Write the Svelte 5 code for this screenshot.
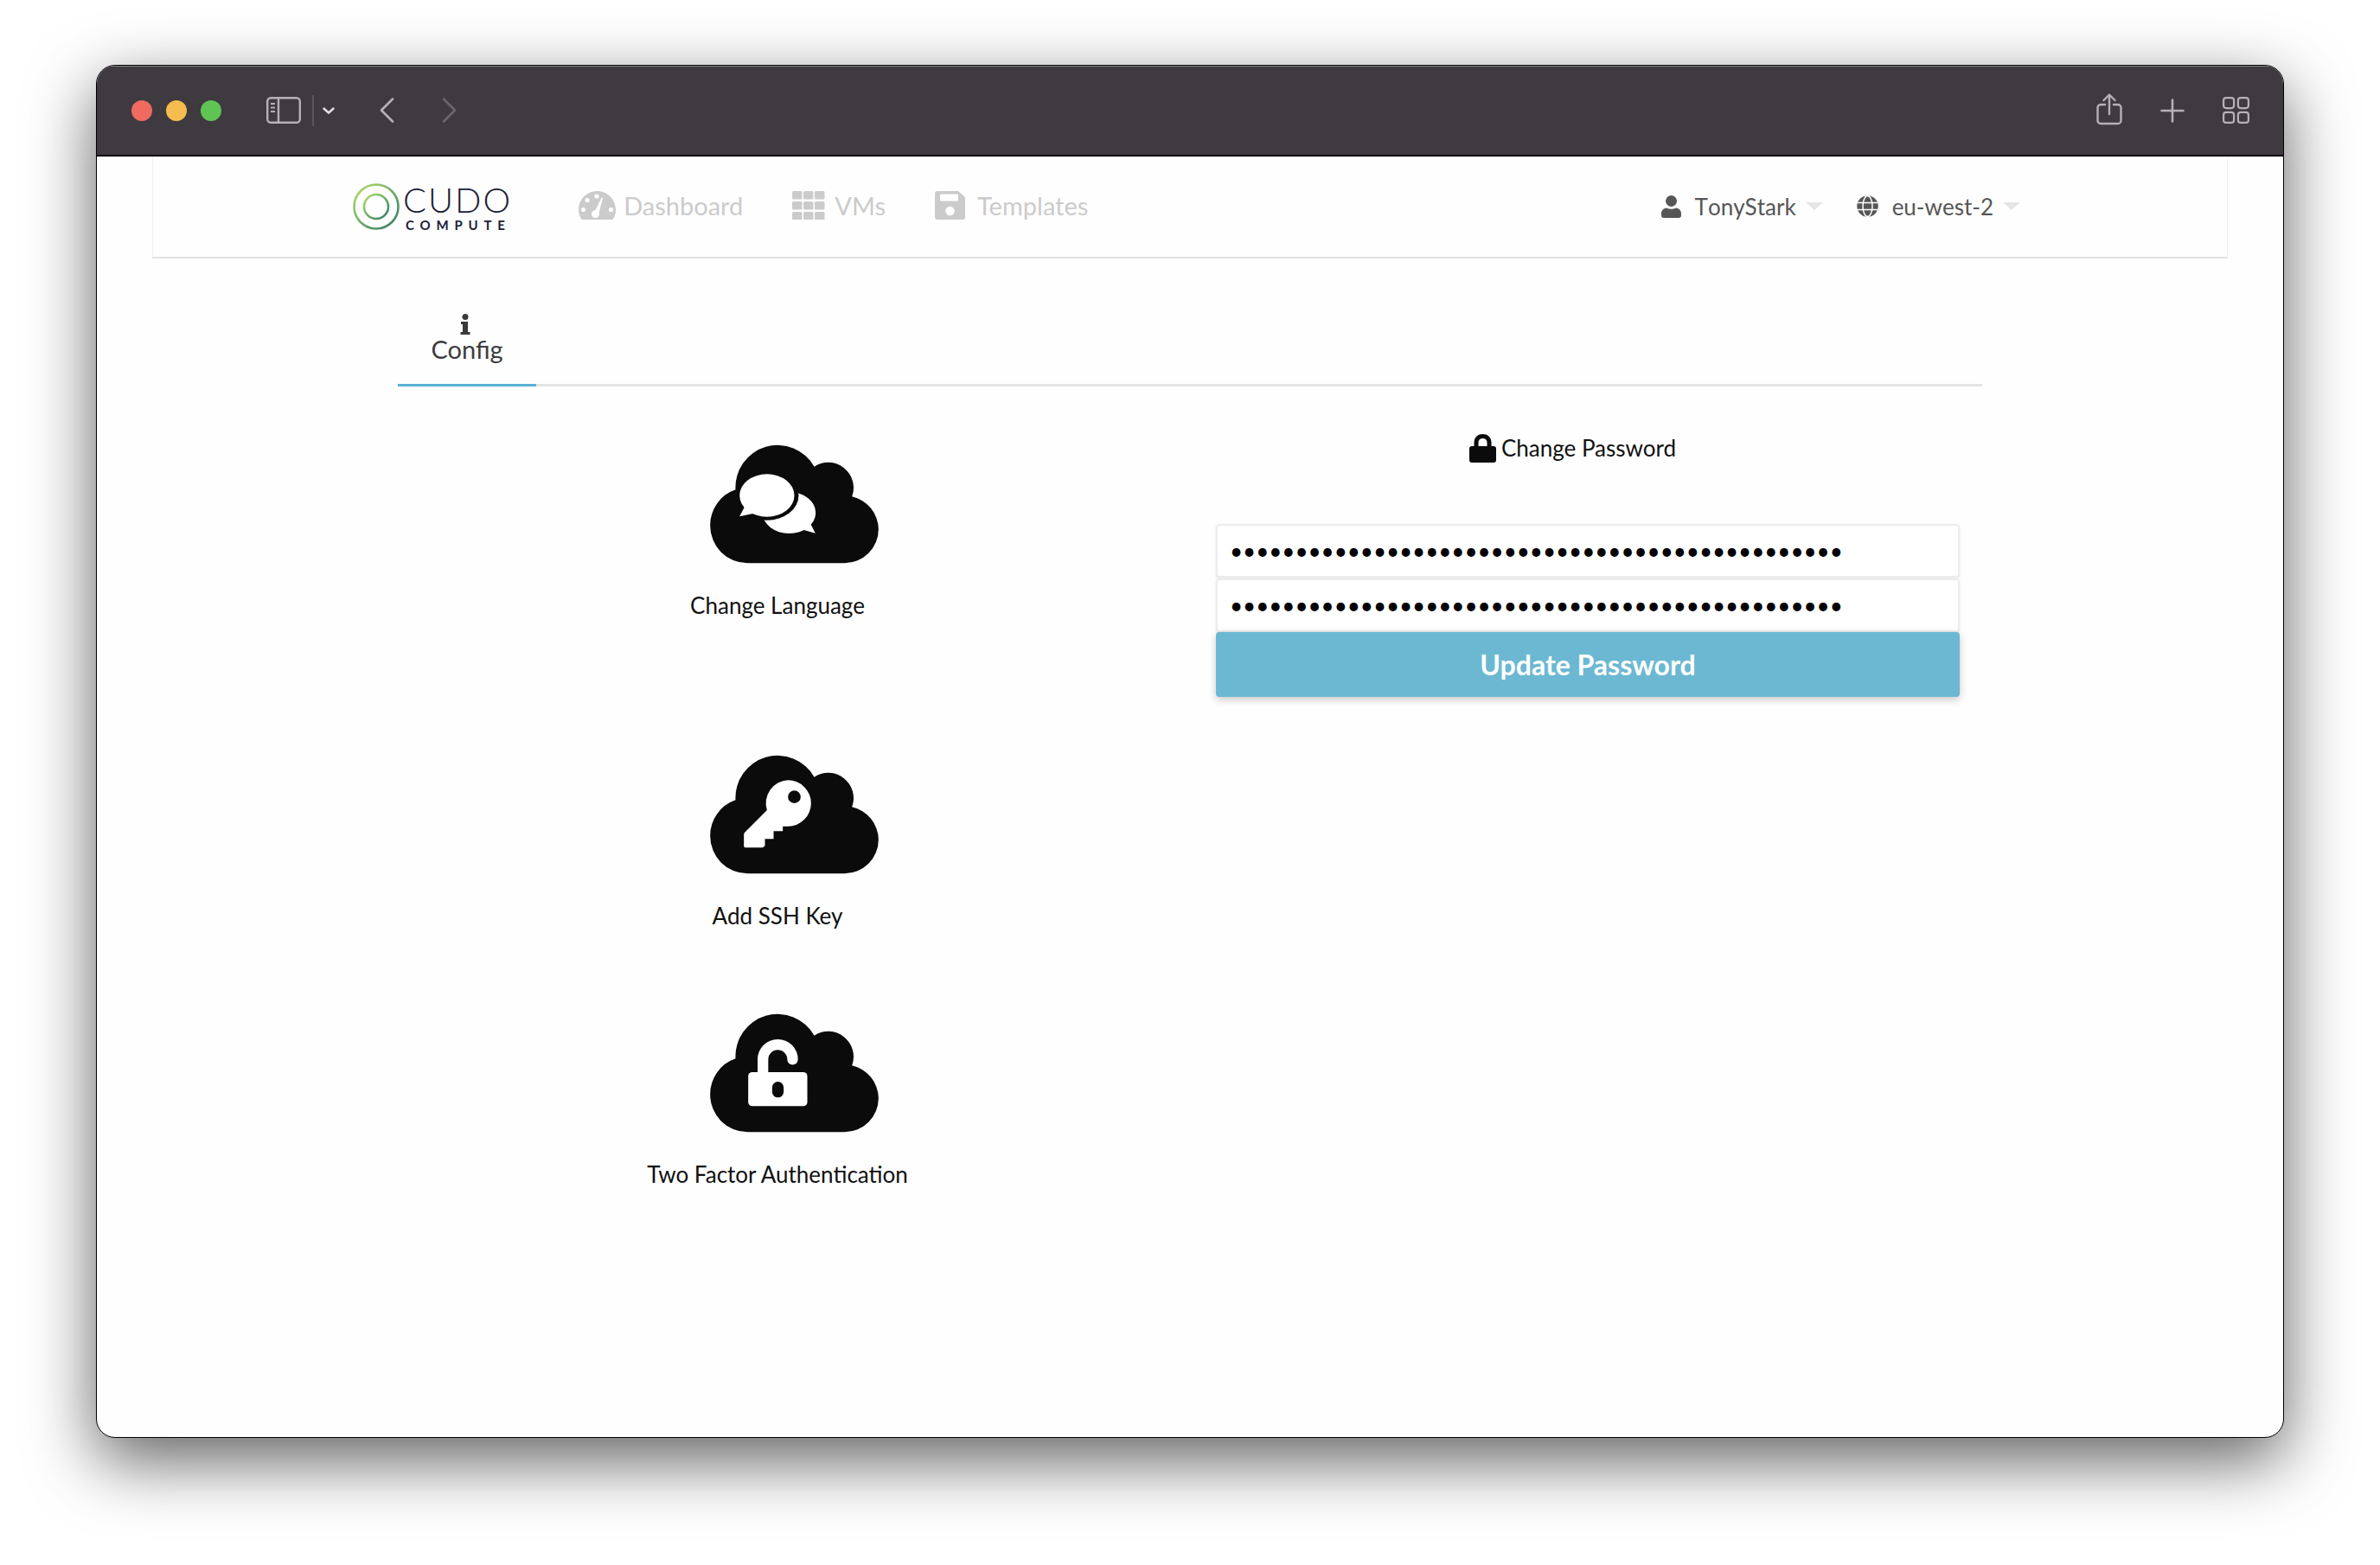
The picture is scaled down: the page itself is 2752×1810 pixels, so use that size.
<script>
	const tiles = [
		{ kind: 'chat', label: 'Change Language', offset: 'first' },
		{ kind: 'key', label: 'Add SSH Key', offset: 'second' },
		{ kind: 'lock', label: 'Two Factor Authentication', offset: 'third' }
	];
	const secret = '•'.repeat(47);
</script>

<div class="window">
	<header class="toolbar">
		<div class="lights">
			<span class="light red"></span>
			<span class="light yellow"></span>
			<span class="light green"></span>
		</div>
		<svg class="tool sidebar" width="40" height="31" viewBox="0 0 40 31" fill="none" stroke="#b5b1b7" stroke-width="2.4">
			<rect x="1.2" y="1.2" width="37.6" height="28.6" rx="4" />
			<path d="M14 1v29" />
			<path d="M5 8h5M5 12.500h5M5 17h5" stroke-width="1.800" />
		</svg>
		<span class="sep"></span>
		<svg class="tool chevron" width="14" height="8" viewBox="0 0 14 8" fill="none" stroke="#e6e3e8" stroke-width="2.400" stroke-linecap="round" stroke-linejoin="round">
			<path d="M1.500 1.500 7 6.500l5.500-5" />
		</svg>
		<svg class="tool back" width="17" height="29" viewBox="0 0 17 29" fill="none" stroke="#b5b1b7" stroke-width="2.600" stroke-linecap="round" stroke-linejoin="round">
			<path d="M15 1.500 2 14.500l13 13" />
		</svg>
		<svg class="tool forward" width="17" height="29" viewBox="0 0 17 29" fill="none" stroke="#6a666d" stroke-width="2.600" stroke-linecap="round" stroke-linejoin="round">
			<path d="M2 1.500l13 13-13 13" />
		</svg>
		<div class="toolbar-right">
			<svg width="30" height="37" viewBox="0 0 30 37" fill="none" stroke="#b5b1b7" stroke-width="2.400" stroke-linecap="round" stroke-linejoin="round">
				<path d="M10 13H5a3.500 3.500 0 0 0-3.500 3.500v15A3.500 3.500 0 0 0 5 35h20a3.500 3.500 0 0 0 3.500-3.500v-15A3.500 3.500 0 0 0 25 13h-5" />
				<path d="M15 24V2M8.500 8 15 1.500 21.500 8" />
			</svg>
			<svg width="28" height="28" viewBox="0 0 28 28" fill="none" stroke="#b5b1b7" stroke-width="2.600" stroke-linecap="round">
				<path d="M14 1.500v25M1.500 14h25" />
			</svg>
			<svg width="31" height="31" viewBox="0 0 31 31" fill="none" stroke="#b5b1b7" stroke-width="2.200">
				<rect x="1.100" y="1.100" width="12" height="12" rx="3" />
				<rect x="17.900" y="1.100" width="12" height="12" rx="3" />
				<rect x="1.100" y="17.900" width="12" height="12" rx="3" />
				<rect x="17.900" y="17.900" width="12" height="12" rx="3" />
			</svg>
		</div>
	</header>

	<div class="page">
		<nav class="nav">
			<div class="logo">
				<svg width="56" height="56" viewBox="0 0 56 56" fill="none">
					<defs>
						<linearGradient id="logo-grad" x1="0.100" y1="0.100" x2="0.900" y2="0.900">
							<stop offset="0" stop-color="#a6d667" />
							<stop offset="1" stop-color="#3f8468" />
						</linearGradient>
					</defs>
					<g stroke="url(#logo-grad)" stroke-width="2.600">
						<circle cx="28" cy="28" r="25.500" />
						<circle cx="28" cy="28" r="14" />
						<path d="M28 3v11M28 42v11" />
					</g>
				</svg>
				<div class="wordmark">
					<span class="cudo">CUDO</span>
					<span class="compute">COMPUTE</span>
				</div>
			</div>

			<a class="nav-item dash" href="#dash">
				<svg width="43" height="33" viewBox="0 0 43 33">
					<path fill="#cbcbcb" d="M21.500 0C9.600 0 0 9.700 0 21.500c0 3.800 1 7.400 2.800 10.500.4.700 1 1 1.700 1h34c.7 0 1.300-.3 1.700-1C42 28.900 43 25.300 43 21.500 43 9.700 33.400 0 21.500 0Z" />
					<g fill="#fff">
						<circle cx="21" cy="6" r="2.600" />
						<circle cx="10" cy="10.500" r="2.600" />
						<circle cx="5.500" cy="21.500" r="2.600" />
						<circle cx="37.500" cy="21.500" r="2.600" />
						<circle cx="19.500" cy="26.500" r="4.500" />
						<path d="M18 25 26.500 7.500l1.600.5L23 27Z" />
					</g>
				</svg>
				<span>Dashboard</span>
			</a>
			<a class="nav-item vms" href="#vms">
				<svg width="38" height="33" viewBox="0 0 38 33" fill="#cbcbcb">
					{#each [0, 13, 26] as x}
						{#each [0, 12, 24] as y}
							<rect x={x} y={y} width="11.500" height="9.500" rx="1.500" />
						{/each}
					{/each}
				</svg>
				<span>VMs</span>
			</a>
			<a class="nav-item tpl" href="#tpl">
				<svg width="35" height="33" viewBox="0 0 35 33">
					<path fill="#cbcbcb" d="M3 0h24l8 7v23a3 3 0 0 1-3 3H3a3 3 0 0 1-3-3V3a3 3 0 0 1 3-3Z" />
					<rect x="6" y="3.500" width="21" height="8" rx="1" fill="#fff" />
					<circle cx="17.500" cy="23" r="5.200" fill="#fff" />
				</svg>
				<span>Templates</span>
			</a>

			<div class="account">
				<div class="drop user">
					<svg width="23" height="26" viewBox="0 0 23 26" fill="#565656">
						<circle cx="11.500" cy="6.500" r="6.500" />
						<path d="M6 14.500c3.500 1.600 7.500 1.600 11 0 3.500.4 6 2.700 6 6.500v2a3 3 0 0 1-3 3H3a3 3 0 0 1-3-3v-2c0-3.800 2.500-6.100 6-6.500Z" />
					</svg>
					<span class="who">TonyStark</span>
					<span class="caret"></span>
				</div>
				<div class="drop region">
					<svg width="25" height="25" viewBox="0 0 25 25" fill="none" stroke="#565656">
						<circle cx="12.500" cy="12.500" r="11" fill="#565656" stroke-width="2.500" />
						<g stroke="#fff" stroke-width="1.500">
							<ellipse cx="12.500" cy="12.500" rx="5.500" ry="12" />
							<path d="M1 8.500h23M1 16.500h23" />
						</g>
					</svg>
					<span class="who">eu-west-2</span>
					<span class="caret"></span>
				</div>
			</div>
		</nav>

		<main class="main">
			<div class="tabs">
				<a class="tab" href="#config">
					<svg width="12" height="24" viewBox="0 0 12 24" fill="#3a3a3a">
						<circle cx="6" cy="3.500" r="3.500" />
						<path d="M1 9h8v12h2.500v3H.5v-3H3v-9H1Z" />
					</svg>
					<span>Config</span>
				</a>
			</div>

			<div class="columns">
				<section class="tiles">
					{#each tiles as tile}
						<a class="tile {tile.offset}" href="#tile">
							<svg width="197" height="140" viewBox="120 70 590 420">
								<path fill="#0b0b0b" d="M253 485A130 130 0 0 1 123 355 130 130 0 0 1 211 230 146 146 0 0 1 484 150 88 88 0 0 1 615 254 118 118 0 0 1 707 367 118 118 0 0 1 589 485Z" />
								{#if tile.kind === 'chat'}
									<ellipse cx="397" cy="310" rx="92" ry="72" fill="#fff" />
									<path fill="#fff" d="M440 368 488 381 468 342Z" />
									<ellipse cx="320" cy="250" rx="110" ry="86" fill="#0b0b0b" />
									<ellipse cx="320" cy="250" rx="95" ry="74" fill="#fff" />
									<path fill="#fff" d="M243 288 225 323 275 312Z" />
								{:else if tile.kind === 'key'}
									<path fill="#fff" d="M393 161a80 80 0 1 1 0 160h-18v17h-32v27h-30v24l-8 6h-60c-3 0-5-3-5-6v-40c0-3 1-5 3-7l77-77a80 80 0 0 1 73-104Z" />
									<circle cx="415" cy="219" r="22" fill="#0b0b0b" />
								{:else}
									<path fill="none" stroke="#fff" stroke-width="37" stroke-linecap="round" d="M306 290V233a51.500 51.500 0 0 1 103 0v0" />
									<rect x="255" y="277" width="205" height="118" rx="14" fill="#fff" />
									<rect x="338" y="310" width="40" height="55" rx="20" fill="#0b0b0b" />
								{/if}
							</svg>
							<span>{tile.label}</span>
						</a>
					{/each}
				</section>

				<section class="password">
					<h3>
						<svg width="31" height="33" viewBox="0 0 31 33" fill="#0b0b0b">
							<path d="M15.500 0C9.300 0 5.500 4.300 5.500 10v4H3a3 3 0 0 0-3 3v13a3 3 0 0 0 3 3h25a3 3 0 0 0 3-3V17a3 3 0 0 0-3-3h-2.500v-4c0-5.700-3.800-10-10-10Zm0 5c3.200 0 5 2.100 5 5v4h-10v-4c0-2.900 1.800-5 5-5Z" />
						</svg>
						<span>Change Password</span>
					</h3>
					<form class="fields" on:submit|preventDefault>
						<input type="password" value={secret} aria-label="New password" />
						<input type="password" value={secret} aria-label="Confirm password" />
						<button type="submit">Update Password</button>
					</form>
				</section>
			</div>
		</main>
	</div>
</div>

<style>
	:global(body) {
		background: #fff;
		font-family: Lato, "Open Sans", sans-serif;
	}

	.window {
		box-sizing: border-box;
		width: 2530px;
		height: 1588px;
		margin: 75px 0 147px 111px;
		display: flex;
		flex-direction: column;
		background: #fefefe;
		border: 1px solid #000;
		border-radius: 22px;
		overflow: hidden;
		box-shadow: 0 26px 78px rgba(0, 0, 0, 0.62);
	}

	.toolbar {
		height: 105px;
		flex: none;
		box-sizing: border-box;
		display: flex;
		align-items: center;
		padding: 0 39px 0 40px;
		background: #3e3a40;
		border-bottom: 2px solid #000;
		box-shadow: inset 0 1px 0 #8a878c;
	}

	.lights {
		display: flex;
		gap: 16px;
	}

	.light {
		width: 24px;
		height: 24px;
		border-radius: 50%;
	}

	.red { background: #ef6a5f; }
	.yellow { background: #f5bd4f; }
	.green { background: #5fc454; }

	.tool { flex: none; }
	.sidebar { margin-left: 52px; }

	.sep {
		width: 2px;
		height: 36px;
		margin-left: 13px;
		background: #59555b;
	}

	.chevron { margin-left: 10px; }
	.back { margin-left: 52px; }
	.forward { margin-left: 55px; }

	.toolbar-right {
		margin-left: auto;
		display: flex;
		align-items: center;
		gap: 44px;
	}

	.toolbar-right svg:first-child {
		margin-bottom: 2px;
	}

	.page {
		flex: 1;
		display: flex;
		flex-direction: column;
		padding: 0 64px;
	}

	.nav {
		height: 118px;
		flex: none;
		box-sizing: border-box;
		display: flex;
		align-items: center;
		padding: 0 0 4px 230px;
		border: 1px solid #f1f1f1;
		border-top: 0;
		border-bottom: 2px solid #e3e3e3;
	}

	.logo {
		display: flex;
		align-items: center;
		gap: 3px;
		margin-top: 4px;
	}

	.wordmark {
		display: flex;
		flex-direction: column;
		color: #1b2036;
		line-height: 1;
	}

	.cudo {
		font-size: 40px;
		font-weight: 300;
		letter-spacing: 2px;
		line-height: 38px;
		height: 38px;
		margin-top: 1px;
	}

	.compute {
		font-size: 15px;
		line-height: 14px;
		font-weight: 700;
		letter-spacing: 6.800px;
		margin: 3px 0 0 3px;
	}

	.nav-item {
		display: flex;
		align-items: center;
		gap: 10px;
		font-size: 29px;
		color: #cbcbcb;
		text-decoration: none;
	}

	.dash { margin-left: 77px; gap: 9px; }
	.vms { margin-left: 57px; gap: 11px; }
	.tpl { margin-left: 57px; gap: 14px; }

	.account {
		margin-left: auto;
		margin-right: 239px;
		margin-top: 3px;
		display: flex;
		align-items: center;
		gap: 39px;
		color: #565656;
		font-size: 26px;
		font-kerning: none;
	}

	.drop {
		display: flex;
		align-items: center;
	}

	.who { margin: 0 11px 0 16px; }

	.caret {
		width: 0;
		height: 0;
		border-left: 10px solid transparent;
		border-right: 10px solid transparent;
		border-top: 9px solid #e5e5e5;
	}

	.main {
		width: 1832px;
		margin-left: 284px;
	}

	.tabs {
		height: 148px;
		box-sizing: border-box;
		border-bottom: 3px solid #e4e4e4;
	}

	.tab {
		box-sizing: border-box;
		width: 160px;
		height: 148px;
		display: flex;
		flex-direction: column;
		align-items: center;
		justify-content: flex-end;
		padding-bottom: 26px;
		border-bottom: 3px solid #5bb2d3;
		color: #3d3d3d;
		font-size: 29px;
		line-height: 29px;
		text-decoration: none;
	}

	.tab svg { margin-left: -4px; margin-bottom: 2px; }

	.columns {
		display: grid;
		grid-template-columns: 878px 860px;
		column-gap: 68px;
	}

	.tiles {
		display: flex;
		flex-direction: column;
		align-items: center;
	}

	.tile {
		display: flex;
		flex-direction: column;
		align-items: center;
		color: #111;
		font-size: 26px;
		text-decoration: none;
	}

	.tile svg {
		margin-left: 38px;
	}

	.tile span {
		margin-top: 31px;
		line-height: 32px;
	}

	.first { margin-top: 66px; }
	.second { margin-top: 156px; }
	.third { margin-top: 96px; }

	.password h3 {
		margin: 53px 35px 0 0;
		display: flex;
		justify-content: center;
		align-items: center;
		gap: 6px;
		height: 36px;
		font-size: 26px;
		font-weight: 400;
		color: #111;
	}

	.fields {
		margin-top: 70px;
		display: flex;
		flex-direction: column;
		gap: 1px;
	}

	input {
		box-sizing: border-box;
		width: 100%;
		height: 62px;
		padding: 0 14px;
		border: 2px solid #ededed;
		border-radius: 4px;
		outline: none;
		background: #fff;
		box-shadow: 0 1px 3px rgba(0, 0, 0, 0.1);
		font-family: Lato, sans-serif;
		font-size: 26px;
		letter-spacing: 0;
		color: #000;
	}

	button {
		height: 75px;
		margin-top: -1px;
		border: 0;
		border-radius: 4px;
		background: #6cb8d2;
		box-shadow: 0 3px 10px rgba(0, 0, 0, 0.22);
		color: #fff;
		font-family: Lato, sans-serif;
		font-size: 32px;
		font-weight: 700;
	}
</style>
